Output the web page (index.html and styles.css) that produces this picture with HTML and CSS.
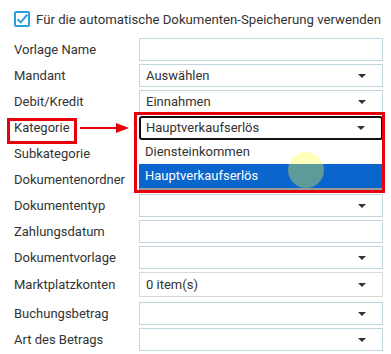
FILE: index.html
```html
<!DOCTYPE html>
<html lang="de">
  <head>
    <meta charset="UTF-8" />
    <title>Dokumentenvorlage</title>
    <link rel="stylesheet" href="styles.css">
  </head>
  <body>
    <label class="check-row">
      <span class="check-box">
        <svg width="16" height="16" viewBox="0 0 16 16"><path d="M3.5 8.2 L6.8 11.4 L13.2 3.6" fill="none" stroke="#2a9fe0" stroke-width="2"/></svg>
      </span>
      Für die automatische Dokumenten-Speicherung verwenden
    </label>

    <div class="form">
      <div class="row"><span class="lbl">Vorlage Name</span><span class="field"></span></div>
      <div class="row"><span class="lbl">Mandant</span><span class="field select">Auswählen<i class="caret"></i></span></div>
      <div class="row"><span class="lbl">Debit/Kredit</span><span class="field select">Einnahmen<i class="caret"></i></span></div>
      <div class="row"><span class="lbl">Kategorie</span><span class="field select focus">Hauptverkaufserlös<i class="caret"></i></span></div>
      <div class="row"><span class="lbl">Subkategorie</span><span class="field select"><i class="caret"></i></span></div>
      <div class="row"><span class="lbl">Dokumentenordner</span><span class="field select"><i class="caret"></i></span></div>
      <div class="row"><span class="lbl">Dokumententyp</span><span class="field select"><i class="caret"></i></span></div>
      <div class="row"><span class="lbl">Zahlungsdatum</span><span class="field"></span></div>
      <div class="row"><span class="lbl">Dokumentvorlage</span><span class="field select"><i class="caret"></i></span></div>
      <div class="row"><span class="lbl">Marktplatzkonten</span><span class="field select multi">0 item(s)<i class="caret"></i></span></div>
      <div class="row"><span class="lbl">Buchungsbetrag</span><span class="field select"><i class="caret"></i></span></div>
      <div class="row"><span class="lbl">Art des Betrags</span><span class="field select"><i class="caret"></i></span></div>

      <ul class="dropdown">
        <li>Diensteinkommen</li>
        <li class="active">Hauptverkaufserlös</li>
      </ul>
      <span class="cursor-dot"></span>

      <span class="mark mark-label"></span>
      <span class="mark mark-select"></span>
      <svg class="arrow" width="50" height="12" viewBox="0 0 50 12">
        <path d="M0 6 H38" stroke="#e8000b" stroke-width="2"/>
        <path d="M36 1 L49 6 L36 11 Z" fill="#e8000b"/>
      </svg>
    </div>
  </body>
</html>
```
FILE: styles.css
```css
body {
  margin: 0;
  padding: 10px 0 0 14px;
  font-family: Roboto, "Noto Sans", sans-serif;
  font-size: 13px;
  color: #333;
  background: #fff;
}

.check-row {
  display: flex;
  align-items: center;
  gap: 6px;
  height: 18px;
  font-size: 13.2px;
  white-space: nowrap;
}

.check-box {
  width: 16px;
  height: 16px;
  flex: none;
  box-sizing: border-box;
  border: 2px solid #2a9fe0;
  border-radius: 2px;
  display: flex;
  align-items: center;
  justify-content: center;
}

.check-box svg {
  flex: none;
}

.form {
  position: relative;
  margin-top: 10px;
  margin-right: 8px;
  display: flex;
  flex-direction: column;
  gap: 3px;
}

.row {
  display: flex;
  align-items: center;
  height: 23px;
}

.lbl {
  width: 125px;
  flex: none;
}

.field {
  flex: 1;
  height: 23px;
  box-sizing: border-box;
  border: 1px solid #c3d6de;
  display: flex;
  align-items: center;
  padding: 0 10px 0 6px;
}

.select {
  justify-content: space-between;
}

.field.multi {
  height: 25px;
  border-color: #d9d9d9;
}

.row:has(.multi) {
  height: 25px;
  margin-bottom: 2px;
}

.field.focus {
  border: 2px solid #111;
  border-radius: 3px;
  padding-left: 5px;
  height: 24px;
}

.caret {
  width: 0;
  height: 0;
  border-left: 4px solid transparent;
  border-right: 4px solid transparent;
  border-top: 4px solid #333;
  margin-left: auto;
  margin-right: 6px;
}

.dropdown {
  position: absolute;
  left: 125px;
  top: 102px;
  width: 244px;
  margin: 0;
  padding: 0;
  list-style: none;
  background: #fff;
  border-bottom: 2px solid #9a9a9a;
}

.dropdown li {
  height: 24px;
  line-height: 24px;
  padding-left: 6px;
}

.dropdown li.active {
  background: #0a66cc;
  color: #fff;
}

.cursor-dot {
  position: absolute;
  left: 274px;
  top: 114px;
  width: 36px;
  height: 36px;
  border-radius: 50%;
  background: rgba(255, 255, 60, 0.34);
}

.mark {
  position: absolute;
  border: 3px solid #e8000b;
  box-sizing: border-box;
}

.mark-label {
  left: -7px;
  top: 80px;
  width: 70px;
  height: 26px;
}

.mark-select {
  left: 120px;
  top: 74px;
  width: 251px;
  height: 81px;
}

.arrow {
  position: absolute;
  left: 66px;
  top: 84px;
}
```
